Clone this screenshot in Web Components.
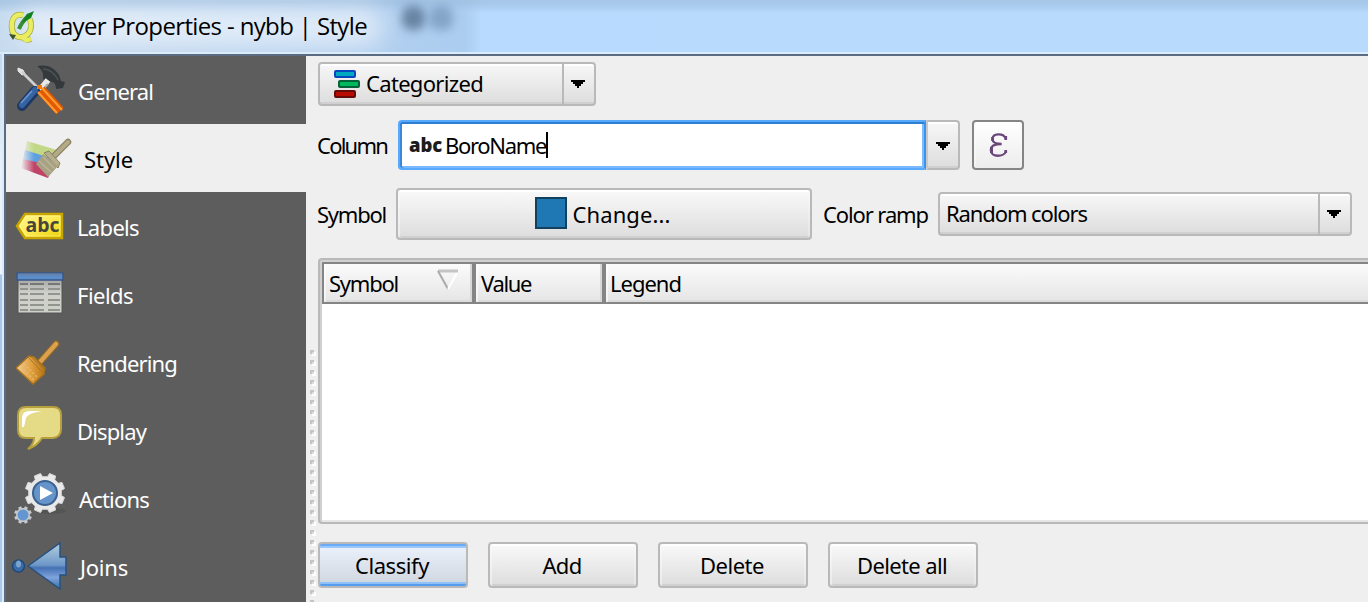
<!DOCTYPE html>
<html lang="en">
<head>
<meta charset="utf-8">
<title>Layer Properties - nybb | Style</title>
<style>
html,body{margin:0;height:602px;overflow:hidden;background:#efefef}
body{font-family:"Noto Sans","Open Sans",sans-serif;font-size:22px;line-height:30px;color:#000}
</style>
</head>
<body>
<layer-dialog></layer-dialog>
<script>
const define = (name, html, setup) => customElements.define(name, class extends HTMLElement {
  connectedCallback() {
    if (this.shadowRoot) return;
    this.attachShadow({mode: 'open'}).innerHTML = html;
    if (setup) setup(this, this.shadowRoot);
  }
});

/* Text run tracked to a given advance width */
define('fit-text', `<style>:host{display:inline-block;white-space:pre;flex:none}span{display:inline-block}</style><span><slot></slot></span>`, (el, root) => {
  const s = root.querySelector('span'), w = +el.getAttribute('w');
  const n = el.textContent.length;
  s.style.letterSpacing = ((w - s.getBoundingClientRect().width) / n) + 'px';
  el.style.width = w + 'px';
});

/* Outline of a cog with n blunt teeth */
const cog = (cx, cy, n, r1, r2) => {
  let d = '';
  for (let k = 0; k < n; k++) {
    const a = (k + .5) * 2 * Math.PI / n, s = Math.PI / n;
    for (const [o, r] of [[-.62, r1], [-.42, r2], [.42, r2], [.62, r1]])
      d += (d ? 'L' : 'M') + (cx + r * Math.cos(a + o * s)).toFixed(1) + ' ' + (cy + r * Math.sin(a + o * s)).toFixed(1);
  }
  return d + 'z';
};

const ICONS = {
general: `<svg width="52" height="52" viewBox="0 0 52 52">
<path d="M3 3l5 2 2 4-3 1-4-4z" fill="#e2e2e2" stroke="#e2e2e2"/><path d="M7 7l17 17" stroke="#d0d0d0" stroke-width="2.6"/>
<path d="M22 1c10-2 17 1 22 9l2 6 4 1-2 6-7 1c0-6-3-8-8-7l-5-3c1-7-2-10-6-13z" fill="#343a3b"/><path d="M28 4c7 0 12 5 15 11" stroke="#4d5354" fill="none" stroke-width="1.5"/>
<path d="M33 15l-8 10" stroke="#e9e9e9" stroke-width="6"/><path d="M33 19l-6 6" stroke="#aaa" stroke-width="2"/>
<path d="M20 26L7 41" stroke="#1d3864" stroke-width="10" stroke-linecap="round"/><path d="M20 25L7 40" stroke="#3564a3" stroke-width="6" stroke-linecap="round"/><path d="M17 26L6 38" stroke="#6d96cc" stroke-width="1.6"/>
<path d="M26 25l19 21" stroke="#e25a00" stroke-width="10"/><path d="M22 22h5" stroke="#f57900" stroke-width="4"/><path d="M27 23l20 22M23 27l19 21" stroke="#ff9b32" stroke-width="2"/></svg>`,
style: `<svg width="52" height="44" viewBox="0 0 52 44"><defs><linearGradient id="f"><stop offset="0" stop-color="#fff" stop-opacity="0"/><stop offset=".25" stop-color="#fff"/></linearGradient><mask id="m"><rect width="52" height="44" fill="url(#f)"/></mask></defs>
<g mask="url(#m)"><path d="M6 4l30 9-3 10L4 14z" fill="#c2d886"/><path d="M4 13l29 9-4 11L2 22z" fill="#5f9fe0"/><path d="M2 22l30 7-5 12L0 31z" fill="#c04468"/></g>
<path d="M47 5L33 19" stroke="#8b8161" stroke-width="6.5" stroke-linecap="round"/><path d="M47 5L33 19" stroke="#b3aa88" stroke-width="4" stroke-linecap="round"/>
<path d="M23 16l5-2 11 12-2 5z" fill="#b7ae8c" stroke="#8b8161"/><path d="M22 17l15 12-10 11-12-13 3-4z" fill="#a9a183"/><path d="M18 24l12 11M22 20l11 11" stroke="#bcb69b" stroke-width="1.2"/></svg>`,
labels: `<svg width="50" height="30" viewBox="0 0 50 30"><defs><linearGradient id="y" x1="0" y1="0" x2="1" y2="1"><stop offset="0" stop-color="#fff59a"/><stop offset=".5" stop-color="#ffec55"/><stop offset="1" stop-color="#ead000"/></linearGradient></defs><path d="M10 3h37v24H10L2 15z" fill="url(#y)" stroke="#c9a500" stroke-width="2.5"/><path d="M11 5h34v20H11L5 15z" fill="none" stroke="#fff6a0" opacity=".6"/><text x="10.500" y="21" font-family="Open Sans,sans-serif" font-style="normal" font-weight="700" font-size="20" textLength="34" lengthAdjust="spacingAndGlyphs" fill="#46463a">abc</text></svg>`,
fields: `<svg width="48" height="42" viewBox="0 0 48 42"><defs><linearGradient id="t" x1="0" y1="0" x2="0" y2="1"><stop offset="0" stop-color="#9c9c9c"/><stop offset=".45" stop-color="#cfd0ca"/><stop offset="1" stop-color="#cfd1c8"/></linearGradient></defs><path d="M2 4h44v37H2z" fill="url(#t)" stroke="#555"/><path d="M1 1h46v7H1z" fill="#5b8dc9" stroke="#38588a" stroke-width="1.5"/><path d="M2 2.5h44" stroke="#6684ab" stroke-width="2"/><g stroke="#92958f" stroke-width="2"><path d="M4 12h8m2 0h14m4 0h12" stroke="#777"/><path d="M4 17h8m2 0h14m4 0h12M4 22h8m2 0h14m4 0h12M4 28h8m2 0h14m4 0h12M4 33h8m2 0h14m4 0h12M4 38h8m2 0h14m4 0h12"/></g></svg>`,
rendering: `<svg width="46" height="46" viewBox="0 0 46 46"><defs><linearGradient id="r" x1="0" x2="1"><stop offset="0" stop-color="#f0cc98"/><stop offset=".5" stop-color="#e2a344"/><stop offset="1" stop-color="#b87610"/></linearGradient></defs><path d="M40 5L24 23" stroke="#8b672b" stroke-width="7" stroke-linecap="round"/><path d="M40 5L24 23" stroke="#dda04c" stroke-width="4.5" stroke-linecap="round"/><path d="M13 17l5 1 11 11-1 6-11 10L0 29z" fill="url(#r)" stroke="#a47020" stroke-width="1.5"/><path d="M12 18l16 17M15 18l13 12" stroke="#a87425" fill="none"/><path d="M8 25l14 14M5 28l14 14" stroke="#edbb72" stroke-width="1.2" stroke-dasharray="2 2"/></svg>`,
display: `<svg width="48" height="46" viewBox="0 0 48 46"><path d="M10 2h27q8 0 8 8v14q0 8-8 9H26Q21 41 12 44q6-5 6-11h-8q-8 0-8-8V10q0-8 8-8z" fill="#e5da85" stroke="#b5a03c" stroke-width="2"/><path d="M6 22V13q0-7 8-7h12q-14 2-16 7-1 5-2 9z" fill="#fff"/></svg>`,
actions: `<svg width="54" height="54" viewBox="0 0 54 54"><ellipse cx="37" cy="39" rx="15" ry="3" fill="#444" opacity=".35"/><path d="${cog(31, 21, 8, 16.5, 20)}" fill="#e9e9e9" stroke="#d5d5d5" stroke-linejoin="round"/><circle cx="31" cy="21" r="12" fill="#6594ca" stroke="#3b6190" stroke-width="2"/><path d="M26 14l13 7-13 7z" fill="#fff"/><path d="${cog(9, 43, 8, 7, 9)}" fill="#c4c8cc"/><circle cx="9" cy="43" r="5.500" fill="#6497d1"/></svg>`,
joins: `<svg width="58" height="50" viewBox="0 0 58 50"><defs><linearGradient id="j" x1="0" y1="0" x2="0" y2="1"><stop offset="0" stop-color="#b4d0e0"/><stop offset=".48" stop-color="#6d97c8"/><stop offset=".54" stop-color="#4471b4"/><stop offset=".75" stop-color="#7fa3dc"/><stop offset="1" stop-color="#3370a8"/></linearGradient></defs><circle cx="7.5" cy="25" r="6" fill="#386ba8" stroke="#224777" stroke-width="1.5"/><ellipse cx="7.500" cy="23" rx="2.500" ry="3.500" fill="#7ba3cd"/><path d="M17 25L49 2v14h6v18h-6v14z" fill="url(#j)" stroke="#27517f" stroke-width="1.5"/></svg>`
};

/* Sidebar entry: icon column followed by its caption */
define('side-item', `<style>
:host{display:flex;height:68px;box-sizing:border-box;align-items:center;color:#fff}
:host([active]){background:#efefef;color:#000}
.i{display:flex;flex:none;width:var(--tx,71px)}svg{display:block;flex:none}
.t{margin-top:1px}</style><div class="i"></div><div class="t"><slot></slot></div>`, (el, root) => {
  const i = root.querySelector('.i');
  i.innerHTML = ICONS[el.getAttribute('icon')];
  const [x, y] = el.getAttribute('shift').split(' ');
  i.style.boxSizing = 'border-box';
  i.style.paddingLeft = x + 'px';
  i.style.transform = `translateY(${y}px)`;
});

define('side-bar', `<style>:host{display:flex;flex-direction:column;width:300px;flex:none;background:#5d5d5d}</style>
<side-item icon="general" shift="9 1" style="--tx:72px"><fit-text w="75">General</fit-text></side-item>
<side-item icon="style" shift="15 1" active style="--tx:78px"><fit-text w="49">Style</fit-text></side-item>
<side-item icon="labels" shift="9 0"><fit-text w="62">Labels</fit-text></side-item>
<side-item icon="fields" shift="10 -1"><fit-text w="56">Fields</fit-text></side-item>
<side-item icon="rendering" shift="10 0"><fit-text w="100">Rendering</fit-text></side-item>
<side-item icon="display" shift="10 -2"><fit-text w="69">Display</fit-text></side-item>
<side-item icon="actions" shift="8 1" style="--tx:73px"><fit-text w="70">Actions</fit-text></side-item>
<side-item icon="joins" shift="5 0" style="--tx:74px"><fit-text w="48">Joins</fit-text></side-item>`);

/* Raised push button */
define('push-button', `<style>
:host{display:flex;box-sizing:border-box;align-items:center;justify-content:center;border:2px solid #b9b9b9;border-radius:4px;background:linear-gradient(#fff 0 2px,#f8f8f8 2px,#dedede calc(100% - 2px),#d0d0d0 calc(100% - 2px));box-shadow:inset 2px 0 #fafafa80,inset -2px 0 #fafafa50;flex:none}
:host([primary]){background:linear-gradient(#6aabf8 0 2px,#99c8fb 2px 4px,#eaf0f9 4px,#d1d8e2 calc(100% - 4px),#8fc0f8 calc(100% - 4px) calc(100% - 2px),#559df0 calc(100% - 2px));box-shadow:none}
:host([tool]){border-color:#858585;background:linear-gradient(#fff,#ececec)}
</style><slot></slot>`);

define('arrow-down', `<style>:host{display:flex;flex:none}</style><svg width="14" height="8" shape-rendering="crispEdges"><path d="M0 0h14v2h-2v2h-2v2H8v2H6V6H4V4H2V2H0z"/></svg>`);

define('combo-box', `<style>
:host{display:flex;box-sizing:border-box;height:44px;border:2px solid #b9b9b9;border-radius:4px;background:linear-gradient(#fff 0 2px,#f6f6f6 2px,#dedede calc(100% - 2px),#d0d0d0 calc(100% - 2px));flex:none}
.v{flex:1;display:flex;align-items:center}
.v ::slotted(fit-text){margin-top:-2px}
.a{width:32px;box-sizing:border-box;border-left:2px solid #b9b9b9;display:flex;justify-content:center;align-items:center;padding-right:2px}
</style><div class="v"><slot></slot></div><div class="a"><arrow-down></arrow-down></div>`);

define('column-field', `<style>
:host{display:flex;height:50px;width:562px;flex:none}
.e{width:528px;box-sizing:border-box;border:2px solid #58a8fc;border-right-color:#3b92f0;border-radius:4px 0 0 4px;background:#fff;box-shadow:inset 0 2px #2d7fd3,inset 2px 0 #3b88d6,inset -2px 0 #7dbcff,inset 0 -2px #79b9ff;display:flex;align-items:center}
.n{font:800 18.500px/26px "Open Sans",sans-serif;margin:-1px 0 0 9px;color:#1c1c1c}
.b{margin:0 0 0 3px}
.c{width:2px;height:26px;background:#000}
.a{width:34px;box-sizing:border-box;border:2px solid #b9b9b9;border-left-color:#c8c8c8;border-radius:0 4px 4px 0;background:linear-gradient(#fff 0 2px,#f6f6f6 2px,#dedede calc(100% - 2px),#d0d0d0 calc(100% - 2px));display:flex;align-items:center;justify-content:center}
.a arrow-down{margin-top:2px}
</style><div class="e"><fit-text class="n" w="33">abc</fit-text><fit-text class="b" w="101">BoroName</fit-text><div class="c"></div></div><div class="a"><arrow-down></arrow-down></div>`);

define('class-table', `<style>
:host{display:flex;flex-direction:column;box-sizing:border-box;height:266px;background:#fff;border:2px solid #b9b9b9;border-right:0;border-radius:4px 0 0 4px;box-shadow:inset 2px 2px #d0d0d0,inset 0 -2px #e6e6e6;padding:2px 0 0 2px}
.h{display:flex;height:42px;box-sizing:border-box;border:2px solid #858585;border-right:0;background:linear-gradient(#fbfbfb,#e6e6e6 calc(100% - 2px),#dcdcdc calc(100% - 2px))}
.s{display:flex;box-sizing:border-box;align-items:center;padding-left:5px;border-right:4px solid #858585;box-shadow:inset 2px 0 #fff8,inset -2px 0 #d8d8d8}
.s:last-child{flex:1;border:0;padding-left:4px;box-shadow:inset 2px 0 #fff8}
svg{margin:-8px 0 0 38px}.s fit-text{margin-top:0}
</style><div class="h"><div class="s" style="width:152px"><fit-text w="69">Symbol</fit-text><svg width="24" height="22"><path d="M2 3h20" stroke="#c5c5c5" stroke-width="3"/><path d="M2 3l10 18" stroke="#aaa" stroke-width="2"/><path d="M21 5l-9 16" stroke="#fff" stroke-width="2"/></svg></div><div class="s" style="width:130px"><fit-text w="50">Value</fit-text></div><div class="s"><fit-text w="71">Legend</fit-text></div></div>`);

define('title-bar', `<style>
:host{display:flex;align-items:center;height:52px;overflow:hidden;position:relative;border-bottom:2px solid #dcebfa;
background:linear-gradient(#9fbfdfb0 0 3px,#a5c5e780 8px,transparent 13px),linear-gradient(90deg,#c6dbef,#bfd6ee 12%,#b3d0ef 27%,#abcdf0 34%,#b7dafe 35.200%,#b7dafd)}
.glow{position:absolute;left:15px;top:8px;width:368px;height:38px;background:#edf4fbc8;filter:blur(12px);border-radius:20px}
.d1,.d2{position:absolute;top:6px;height:24px;filter:blur(5px);border-radius:9px}
.d1{left:402px;width:23px;background:#4c6887b8}.d2{left:429px;width:24px;background:#597ba280}
svg{position:relative;margin:0 0 0 8px;flex:none}
fit-text{position:relative;font:24px/34px "Open Sans",sans-serif;margin:0 0 1px 14px}
</style><div class="glow"></div><div class="d1"></div><div class="d2"></div>
<svg width="26" height="34" viewBox="0 0 26 34"><path d="M15 6C5 4 3 13 4 20c1 7 8 10 13 7 6-3 7-10 5-17M14 26c2 5 4 6 9 4" fill="none" stroke="#a3ab48" stroke-width="6"/><path d="M15 6C5 4 3 13 4 20c1 7 8 10 13 7 6-3 7-10 5-17M14 26c2 5 4 6 9 4" fill="none" stroke="#eaec62" stroke-width="4.500"/><path d="M11 20c2-6 5-9 10-14" stroke="#3a8d35" stroke-width="4" fill="none"/><path d="M26 2l-7 3-5 9 9-5z" fill="#128120"/><path d="M1 25l7 1-3 5z" fill="#3f542c"/></svg>
<fit-text w="319">Layer Properties - nybb | Style</fit-text>`);

define('style-page', `<style>
:host{display:flex;flex:1;min-width:0;background:#efefef}
.split{width:12px;box-sizing:border-box;padding:294px 0 0 4px;flex:none}
.main{flex:1;min-width:0;padding-top:6px}
.row{display:flex;align-items:center}
.lab{margin:0 0 0 -1px}
push-button > fit-text{margin-left:-2px}
</style><div class="split"><svg width="6" height="252" shape-rendering="crispEdges"><defs><pattern id="p" width="6" height="10" patternUnits="userSpaceOnUse"><path d="M2 2h4v4H2z" fill="#fff"/><path d="M0 0h4v2H2v2H0z" fill="#c4c4c4"/><path d="M2 2h2v2H2z" fill="#ddd"/></pattern></defs><rect width="6" height="252" fill="url(#p)"/></svg></div>
<div class="main">
<div class="row" style="height:44px"><combo-box style="width:278px"><svg width="28" height="30" style="margin:0 5px 0 13px"><g stroke-width="2"><rect x="2" y="2" width="20" height="6" rx="1" fill="#00a8c0" stroke="#0747c0"/><rect x="6" y="12" width="20" height="6" rx="1" fill="#00b85c" stroke="#04623a"/><rect x="2" y="22" width="20" height="6" rx="1" fill="#b80c00" stroke="#650c08"/></g></svg><fit-text w="117">Categorized</fit-text></combo-box></div>
<div class="row" style="height:50px;margin-top:14px"><fit-text class="lab" w="70" style="margin-right:11px">Column</fit-text><column-field></column-field><push-button tool style="width:52px;height:50px;margin-left:12px"><svg width="20" height="26" viewBox="0 0 22 26" preserveAspectRatio="none"><path d="M19 6C17 1 5 1 5 7c0 4 4 5 10 5M15 12C7 12 3 14 3 18c0 8 15 7 17 1" fill="none" stroke="#69477a" stroke-width="2.3"/><path d="M4 15v6M19.500 4v4M19.500 18v3M5 5v4" stroke="#69477a" stroke-width="3"/></svg></push-button></div>
<div class="row" style="height:52px;margin-top:18px"><fit-text class="lab" w="69" style="margin-right:10px">Symbol</fit-text><push-button style="width:416px;height:52px"><svg width="32" height="32" style="margin:-2px 8px 0 -3px"><rect x="1" y="1" width="30" height="30" fill="#1f78b4" stroke="#12405f" stroke-width="2"/></svg><fit-text w="98" style="margin-top:-1px">Change...</fit-text></push-button><fit-text w="105" style="margin:0 10px 0 11px">Color ramp</fit-text><combo-box style="width:414px"><fit-text w="141" style="margin-left:6px">Random colors</fit-text></combo-box></div>
<class-table style="margin-top:18px"></class-table>
<div class="row" style="gap:20px;margin-top:18px;height:46px"><push-button primary style="width:150px;height:46px"><fit-text w="74">Classify</fit-text></push-button><push-button style="width:150px;height:46px"><fit-text w="39">Add</fit-text></push-button><push-button style="width:150px;height:46px"><fit-text w="64">Delete</fit-text></push-button><push-button style="width:150px;height:46px"><fit-text w="90">Delete all</fit-text></push-button></div>
</div>`);

define('layer-dialog', `<style>
:host{display:flex;flex-direction:column;height:602px;overflow:hidden}
.body{display:flex;height:548px}
.edge{width:4px;flex:none;background:linear-gradient(90deg,transparent 2px,#dce9f6 2px),linear-gradient(#c2d9ef,#e9f2fa 120px,#edf4fb 220px,#a8c8ea 221px,#a9caec)}
.in{display:flex;flex:1;min-width:0;box-sizing:border-box;border:2px solid #5a6c82;border-right:0;border-bottom:0}
</style><title-bar></title-bar><div class="body"><div class="edge"></div><div class="in"><side-bar></side-bar><style-page></style-page></div></div>`);
</script>
</body>
</html>
